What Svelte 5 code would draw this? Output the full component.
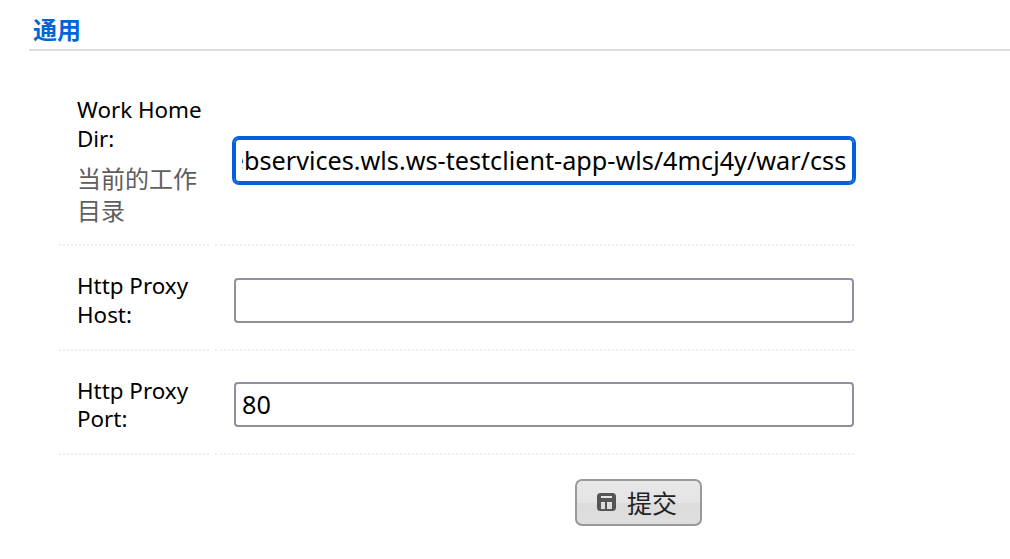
<script>
	import { onMount } from 'svelte';

	const rows = [
		{ label: 'Work Home Dir:', hint: '当前的工作目录', value: 'webservices.wls.ws-testclient-app-wls/4mcj4y/war/css', active: true },
		{ label: 'Http Proxy Host:', value: '' },
		{ label: 'Http Proxy Port:', value: '80' }
	];

	onMount(() => {
		// long path stays scrolled to its end, as when focused
		const el = document.querySelector('.active');
		if (el) el.scrollLeft = el.scrollWidth;
	});
</script>

<div class="page">
	<h3 class="section-title">通用</h3>
	<div class="form">
		{#each rows as row}
			<div class="row">
				<div class="label-cell">
					<label class="label">{row.label}</label>
					{#if row.hint}
						<div class="hint">{row.hint}</div>
					{/if}
				</div>
				<div class="field-cell">
					<input class="input" class:active={row.active} type="text" value={row.value} />
				</div>
			</div>
		{/each}
		<div class="actions">
			<button class="submit" type="button">
				<svg class="icon" viewBox="0 0 19 18" width="19" height="18" aria-hidden="true">
					<path fill="#555" fill-rule="evenodd" d="M3.500 0h12A3.500 3.500 0 0 1 19 3.500v11a3.500 3.500 0 0 1-3.500 3.500h-12A3.500 3.500 0 0 1 0 14.500v-11A3.500 3.500 0 0 1 3.500 0zM4 3v2h11V3zM4 9v7h4V9zM10 9v7h5V9z" />
				</svg>
				<span>提交</span>
			</button>
		</div>
	</div>
</div>

<style>
	:global(body) {
		margin: 0;
		background: #fff;
		font-family: 'Noto Sans', 'Noto Sans CJK SC', sans-serif;
	}

	.page {
		width: 1010px;
		height: 559px;
		overflow: hidden;
		box-sizing: border-box;
		padding: 14px 0 0 29px;
	}

	.section-title {
		margin: 0;
		padding: 0 0 0 4px;
		height: 37px;
		box-sizing: border-box;
		font-family: 'Noto Sans CJK SC', sans-serif;
		font-size: 24px;
		line-height: 30px;
		font-weight: 700;
		color: #0066d6;
		border-bottom: 2px solid #dcdcdc;
	}

	.form {
		width: 795px;
		margin-left: 30px;
	}

	.row {
		display: grid;
		grid-template-columns: 150px 639px;
		column-gap: 6px;
	}

	.label-cell {
		padding: 45px 0 18px 18px;
		border-bottom: 2px dotted #eee;
		font-size: 22.4px;
		line-height: 28.8px;
		color: #000;
	}

	.row + .row .label-cell {
		padding-top: 26px;
		padding-bottom: 19px;
	}

	.label {
		display: block;
	}

	.hint {
		margin-top: 8.400px;
		font-family: 'Noto Sans CJK SC', sans-serif;
		font-size: 24px;
		line-height: 32px;
		color: #5e5e5e;
	}

	.field-cell {
		display: flex;
		align-items: center;
		padding: 6px 0 0 19px;
		border-bottom: 2px dotted #eee;
	}

	.row:first-child .field-cell {
		padding-top: 27px;
	}

	.input {
		width: 100%;
		height: 45px;
		box-sizing: border-box;
		padding: 0 6px 2px;
		border: 2px solid #8f8f9d;
		border-radius: 4px;
		background: #fff;
		font-family: inherit;
		font-size: 25.200px;
		color: #000;
		outline: none;
	}

	.input.active {
		border-color: #0060df;
		outline: 2px solid #0060df;
		border-radius: 5px;
	}

	.actions {
		display: flex;
		padding: 24px 0 0 516px;
	}

	.submit {
		display: flex;
		align-items: center;
		gap: 11px;
		width: 127px;
		height: 47px;
		box-sizing: border-box;
		padding: 0 0 2px 20px;
		border: 2px solid #999;
		border-radius: 7px;
		background: linear-gradient(#e8e8e8 0%, #e4e4e4 50%, #dcdcdc 52%, #dedede 100%);
		font-family: 'Noto Sans CJK SC', sans-serif;
		font-size: 25px;
		color: #222;
	}

	.icon {
		flex: none;
	}
</style>
